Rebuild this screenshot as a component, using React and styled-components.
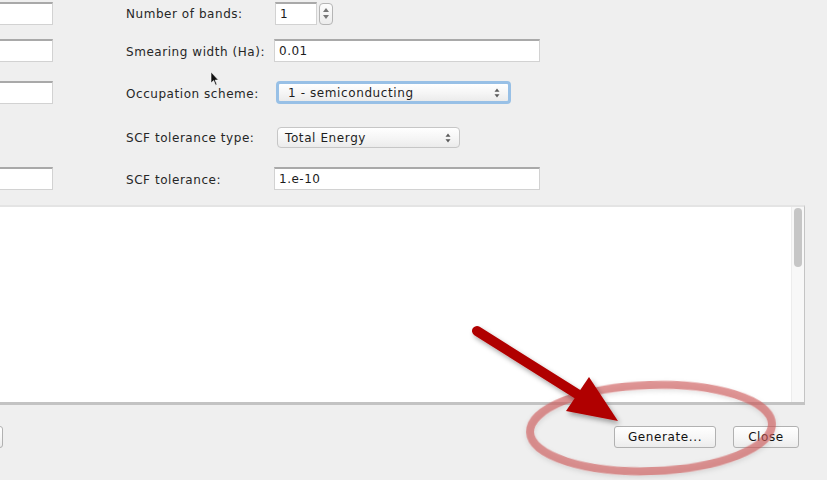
import React from 'react';
import styled, { createGlobalStyle } from 'styled-components';

const GlobalStyle = createGlobalStyle`
  html, body {
    margin: 0;
    padding: 0;
    background: #efefef;
    overflow: hidden;
  }
  body {
    font-family: "DejaVu Sans", "Liberation Sans", sans-serif;
    font-size: 12px;
    color: #262626;
  }
`;

const Viewport = styled.div`
  position: relative;
  width: 827px;
  height: 480px;
  overflow: hidden;
`;

/* the dialog is wider than the picture: its left part lies outside the crop */
const Dialog = styled.div`
  width: 1027px;
  margin-left: -200px;
  padding-right: 22px;
  box-sizing: border-box;
`;

const Form = styled.div`
  display: flex;
  flex-direction: column;
`;

const Row = styled.div`
  display: flex;
  align-items: center;
  height: 23px;
  margin-top: ${(p) => p.$top}px;
`;

const LeftSlot = styled.div`
  width: 253px;
  padding-left: 100px;
  box-sizing: border-box;
  display: flex;
`;

const Label = styled.div`
  margin-left: 73px;
  width: 148px;
  white-space: nowrap;
  letter-spacing: 0.55px;
  margin-top: ${(p) => p.$dy || 0}px;
`;

const TextField = styled.div`
  width: ${(p) => p.$w || '100%'};
  height: 23px;
  box-sizing: border-box;
  background: #fff;
  border: 1px solid #d2d2d2;
  border-top: 2px solid #a9a9a9;
  display: flex;
  align-items: center;
  padding-left: 4px;
  color: #1c1c1c;
  letter-spacing: 0.5px;
`;

const SpinGroup = styled.div`
  display: flex;
  align-items: center;
  gap: 2px;
  margin-left: 1px;
`;

const Stepper = styled.div`
  width: 14px;
  height: 22px;
  box-sizing: border-box;
  border: 1px solid #b5b5b5;
  border-radius: 4px;
  background: linear-gradient(#fdfdfd, #ececec);
  display: flex;
  flex-direction: column;
  align-items: center;
  justify-content: center;
  gap: 3px;
`;

const Popup = styled.div`
  width: ${(p) => p.$w}px;
  height: ${(p) => (p.$focused ? 23 : 21)}px;
  margin-left: ${(p) => (p.$focused ? 2 : 3)}px;
  box-sizing: border-box;
  border-radius: 4px;
  border: ${(p) => (p.$focused ? '3px solid #98c0e6' : '1px solid #c6c6c6')};
  background: linear-gradient(#ffffff, #f4f4f4 60%, #ebebeb);
  display: flex;
  align-items: center;
  justify-content: space-between;
  padding: 0 8px 0 ${(p) => (p.$focused ? 9 : 7)}px;
  color: #1e1e1e;
  letter-spacing: 0.6px;
`;

const UpDown = () => (
  <svg width="6" height="10" viewBox="0 0 6 10">
    <path d="M3 0.5 L5.5 3.8 H0.5 Z" fill="#5a5a5a" />
    <path d="M3 9.5 L5.5 6.2 H0.5 Z" fill="#5a5a5a" />
  </svg>
);

const TextArea = styled.div`
  margin-top: 15px;
  height: 200px;
  box-sizing: border-box;
  background: #fff;
  border-top: 2px solid #e4e4e4;
  border-right: 1px solid #c4c4c4;
  border-bottom: 3px solid #c3c3c3;
  display: flex;
  justify-content: flex-end;
`;

const ScrollTrack = styled.div`
  width: 13px;
  background: #f8f8f8;
  border-left: 1px solid #ededed;
  padding: 1px 3px 0 2px;
  box-sizing: border-box;
`;

const Thumb = styled.div`
  width: 8px;
  height: 59px;
  border-radius: 4px;
  background: #c6c6c6;
`;

const ButtonBar = styled.div`
  display: flex;
  align-items: center;
  margin-top: 21px;
  padding: 0 6px 0 120px;
  gap: 17px;
`;

const Button = styled.div`
  width: ${(p) => p.$w}px;
  height: 22px;
  box-sizing: border-box;
  border: 1px solid #b1b1b1;
  border-radius: 3px;
  background: linear-gradient(#ffffff, #f6f6f6 55%, #ececec);
  display: flex;
  align-items: center;
  justify-content: center;
  color: #111;
  letter-spacing: 0.6px;
  margin-right: ${(p) => (p.$left ? 'auto' : '0')};
`;

const Overlay = styled.svg`
  position: absolute;
  left: 0;
  top: 0;
  pointer-events: none;
`;

const Cursor = styled.svg`
  position: absolute;
  left: 210px;
  top: 71px;
`;

export default function App() {
  return (
    <Viewport>
      <GlobalStyle />
      <Dialog>
        <Form>
          <Row $top={2}>
            <LeftSlot>
              <TextField />
            </LeftSlot>
            <Label>Number of bands:</Label>
            <SpinGroup>
              <TextField $w="42px">1</TextField>
              <Stepper>
                <svg width="6" height="4" viewBox="0 0 6 4">
                  <path d="M3 0 L6 4 H0 Z" fill="#777" />
                </svg>
                <svg width="6" height="4" viewBox="0 0 6 4">
                  <path d="M3 4 L6 0 H0 Z" fill="#777" />
                </svg>
              </Stepper>
            </SpinGroup>
          </Row>
          <Row $top={14}>
            <LeftSlot>
              <TextField />
            </LeftSlot>
            <Label $dy={2}>Smearing width (Ha):</Label>
            <TextField $w="266px">0.01</TextField>
          </Row>
          <Row $top={19}>
            <LeftSlot>
              <TextField />
            </LeftSlot>
            <Label $dy={2}>Occupation scheme:</Label>
            <Popup $w={235} $focused>
              <span>1 - semiconducting</span>
              <UpDown />
            </Popup>
          </Row>
          <Row $top={22}>
            <LeftSlot />
            <Label>SCF tolerance type:</Label>
            <Popup $w={183}>
              <span>Total Energy</span>
              <UpDown />
            </Popup>
          </Row>
          <Row $top={18}>
            <LeftSlot>
              <TextField />
            </LeftSlot>
            <Label $dy={2}>SCF tolerance:</Label>
            <TextField $w="266px">1.e-10</TextField>
          </Row>
        </Form>
        <TextArea>
          <ScrollTrack>
            <Thumb />
          </ScrollTrack>
        </TextArea>
        <ButtonBar>
          <Button $w={83} $left />
          <Button $w={102}>Generate...</Button>
          <Button $w={66}>Close</Button>
        </ButtonBar>
      </Dialog>

      <Cursor width="9" height="16" viewBox="0 0 9 16">
        <path d="M1 1 L1 12 L3.6 9.6 L5.6 14.2 L7 13.6 L5.1 9.1 L8.4 9.1 Z" fill="#111" stroke="#fff" strokeWidth="0.6" />
      </Cursor>

      <Overlay width="827" height="480" viewBox="0 0 827 480">
        <defs>
          <filter id="shadow" x="-20%" y="-20%" width="140%" height="140%">
            <feDropShadow dx="2" dy="3" stdDeviation="2.5" floodColor="#000" floodOpacity="0.35" />
          </filter>
          <filter id="ringShadow" x="-20%" y="-30%" width="140%" height="160%">
            <feDropShadow dx="0" dy="2" stdDeviation="2.5" floodColor="#000" floodOpacity="0.18" />
          </filter>
        </defs>
        <ellipse
          cx="651"
          cy="428"
          rx="121"
          ry="43"
          transform="rotate(-2 651 428)"
          fill="none"
          stroke="#cf5a5a"
          strokeOpacity="0.62"
          strokeWidth="8"
          filter="url(#ringShadow)"
        />
        <g filter="url(#shadow)">
          <line x1="477" y1="331" x2="582" y2="397" stroke="#b00000" strokeWidth="10" strokeLinecap="round" />
          <path d="M618 421 L566 411 L589 377 Z" fill="#b00000" />
        </g>
      </Overlay>
    </Viewport>
  );
}
